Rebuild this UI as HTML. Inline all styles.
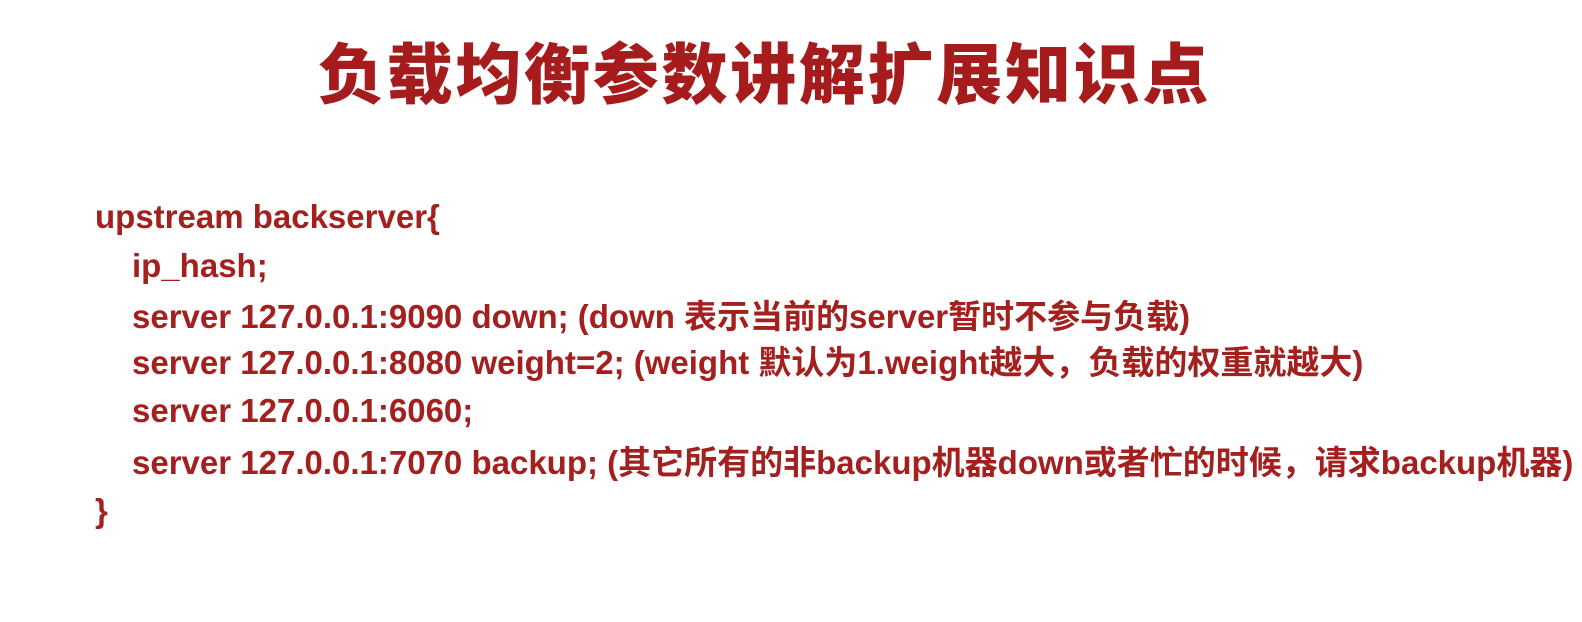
<!DOCTYPE html>
<html><head><meta charset="utf-8"><style>
html,body{margin:0;padding:0;background:#fff;width:1582px;height:622px;overflow:hidden}
body{position:relative;font-family:"Liberation Sans","Noto Sans CJK SC",sans-serif;color:#a3201f;font-weight:bold}
.t{position:absolute;left:318px;top:22px;font-size:66px;letter-spacing:2.7px;white-space:nowrap;font-family:"Noto Sans CJK SC",sans-serif;font-weight:900;color:#a61c1c}
.l{position:absolute;font-size:33px;white-space:nowrap;line-height:38px}
</style></head><body>
<div class="t">负载均衡参数讲解扩展知识点</div>
<div class="l" style="left:95px;top:198px">upstream backserver{</div>
<div class="l" style="left:132px;top:247px">ip_hash;</div>
<div class="l" style="left:132px;top:298px">server 127.0.0.1:9090 down; (down 表示当前的server暂时不参与负载)</div>
<div class="l" style="left:132px;top:344px">server 127.0.0.1:8080 weight=2; (weight 默认为1.weight越大，负载的权重就越大)</div>
<div class="l" style="left:132px;top:392px">server 127.0.0.1:6060;</div>
<div class="l" style="left:132px;top:444px">server 127.0.0.1:7070 backup; (其它所有的非backup机器down或者忙的时候，请求backup机器)</div>
<div class="l" style="left:95px;top:492px">}</div>
</body></html>
